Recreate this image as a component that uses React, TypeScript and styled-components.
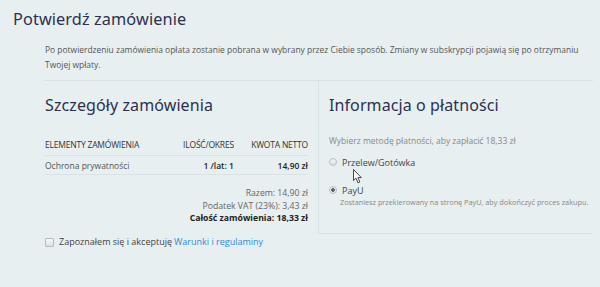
import React from "react";
import styled, { createGlobalStyle } from "styled-components";

const GlobalStyle = createGlobalStyle`
  html, body {
    margin: 0;
    padding: 0;
    background: #e8eff0;
  }
  body {
    font-family: "Open Sans", "Liberation Sans", sans-serif;
    color: #444;
  }
`;

const Page = styled.div`
  width: 600px;
  height: 287px;
  padding: 9px 7px 0 13px;
  box-sizing: border-box;
  overflow: hidden;
`;

const Title = styled.h1`
  margin: 0;
  font-family: "Noto Sans", "DejaVu Sans", sans-serif;
  font-weight: 400;
  font-size: 16.3px;
  line-height: 21px;
  color: #2b3150;
  letter-spacing: 0.1px;
`;

const Intro = styled.p`
  margin: 12px 0 0 32px;
  font-size: 8.45px;
  line-height: 15px;
  color: #555;
  width: 552px;
`;

const Panels = styled.div`
  margin: 8px 0 0 32px;
  width: 548px;
  height: 153px;
  display: grid;
  grid-template-columns: 273px 1fr;
  border-top: 1px solid #d9e3e5;
`;

const Column = styled.div<{ $side?: boolean }>`
  padding: 14px 0 0 ${(p) => (p.$side ? "10px" : "0")};
  border-left: ${(p) => (p.$side ? "1px solid #d9e3e5" : "none")};
  border-bottom: ${(p) => (p.$side ? "1px solid #d9e3e5" : "none")};
`;

const Heading = styled.h2`
  margin: 0;
  font-family: "Noto Sans", "DejaVu Sans", sans-serif;
  font-weight: 400;
  font-size: 16px;
  line-height: 20px;
  color: #2b3150;
  letter-spacing: 0.1px;
`;

const Table = styled.table`
  margin-top: 22px;
  width: 263px;
  border-collapse: collapse;
  font-size: 8.5px;
  color: #444;
`;

const Th = styled.th<{ $right?: boolean }>`
  text-align: ${(p) => (p.$right ? "right" : "left")};
  font-weight: 400;
  text-transform: uppercase;
  padding: 0 0 4px;
  height: 14px;
  border-bottom: 1px solid #d9e3e5;
  color: #333;
  letter-spacing: -0.2px;
`;

const Td = styled.td<{ $right?: boolean; $bold?: boolean }>`
  text-align: ${(p) => (p.$right ? "right" : "left")};
  font-weight: ${(p) => (p.$bold ? 600 : 400)};
  padding: 0;
  height: 18px;
  border-bottom: 1px solid #d9e3e5;
  color: ${(p) => (p.$bold ? "#222" : "#555")};
`;

const Totals = styled.div`
  width: 263px;
  margin-top: 12px;
  display: flex;
  flex-direction: column;
  align-items: flex-end;
  font-size: 8.7px;
  line-height: 12.5px;
  color: #666;
`;

const TotalLine = styled.div<{ $bold?: boolean }>`
  font-weight: ${(p) => (p.$bold ? 700 : 400)};
  color: ${(p) => (p.$bold ? "#222" : "#666")};
`;

const Hint = styled.div`
  margin-top: 20px;
  font-size: 8.5px;
  color: #888;
`;

const Option = styled.label<{ $gap: number }>`
  position: relative;
  display: flex;
  align-items: center;
  gap: 5px;
  height: 12px;
  font-size: 9px;
  color: #444;
  margin-top: ${(p) => p.$gap}px;
`;

const Radio = styled.span<{ $checked?: boolean }>`
  width: 6px;
  height: 6px;
  border-radius: 50%;
  border: 1px solid #b8bec2;
  background: ${(p) =>
    p.$checked
      ? "radial-gradient(circle, #666 0 1.6px, #eceeef 2px)"
      : "linear-gradient(#f4f5f6, #dfe2e4)"};
  flex: none;
`;

const OptionNote = styled.div`
  margin: 1px 0 0 11px;
  font-size: 7.3px;
  line-height: 11px;
  color: #888;
`;

const Cursor = styled.svg`
  position: absolute;
  left: 24px;
  top: 13px;
`;

const Accept = styled.label`
  margin: 2px 0 0 32px;
  display: flex;
  align-items: center;
  gap: 5px;
  font-size: 9px;
  line-height: 12px;
  color: #444;
`;

const Box = styled.span`
  width: 7px;
  height: 7px;
  border: 1px solid #b5bbbf;
  border-radius: 1px;
  background: linear-gradient(#f6f7f8, #dde1e3);
`;

const Link = styled.a`
  color: #2a8ce0;
  text-decoration: none;
  margin-left: -3px;
`;

export default function App() {
  return (
    <Page>
      <GlobalStyle />
      <Title>Potwierdź zamówienie</Title>
      <Intro>
        Po potwierdzeniu zamówienia opłata zostanie pobrana w wybrany przez
        Ciebie sposób. Zmiany w subskrypcji pojawią się po otrzymaniu Twojej
        wpłaty.
      </Intro>
      <Panels>
        <Column>
          <Heading>Szczegóły zamówienia</Heading>
          <Table>
            <thead>
              <tr>
                <Th>Elementy zamówienia</Th>
                <Th $right>Ilość/okres</Th>
                <Th $right>Kwota netto</Th>
              </tr>
            </thead>
            <tbody>
              <tr>
                <Td>Ochrona prywatności</Td>
                <Td $right $bold>
                  1 /lat: 1
                </Td>
                <Td $right $bold>
                  14,90 zł
                </Td>
              </tr>
            </tbody>
          </Table>
          <Totals>
            <TotalLine>Razem: 14,90 zł</TotalLine>
            <TotalLine>Podatek VAT (23%): 3,43 zł</TotalLine>
            <TotalLine $bold>Całość zamówienia: 18,33 zł</TotalLine>
          </Totals>
        </Column>
        <Column $side>
          <Heading>Informacja o płatności</Heading>
          <Hint>Wybierz metodę płatności, aby zapłacić 18,33 zł</Hint>
          <Option $gap={10}>
            <Radio />
            Przelew/Gotówka
            <Cursor width="10" height="15" viewBox="0 0 10 15">
              <path
                d="M0.5 0.5 L0.5 11.5 L3 9.2 L5 13.8 L6.8 13 L4.9 8.6 L8.3 8.6 Z"
                fill="#fff"
                stroke="#333"
                strokeWidth="0.9"
                strokeLinejoin="round"
              />
            </Cursor>
          </Option>
          <Option $gap={16}>
            <Radio $checked />
            PayU
          </Option>
          <OptionNote>
            Zostaniesz przekierowany na stronę PayU, aby dokończyć proces
            zakupu.
          </OptionNote>
        </Column>
      </Panels>
      <Accept>
        <Box />
        Zapoznałem się i akceptuję <Link href="#">Warunki i regulaminy</Link>
      </Accept>
    </Page>
  );
}
